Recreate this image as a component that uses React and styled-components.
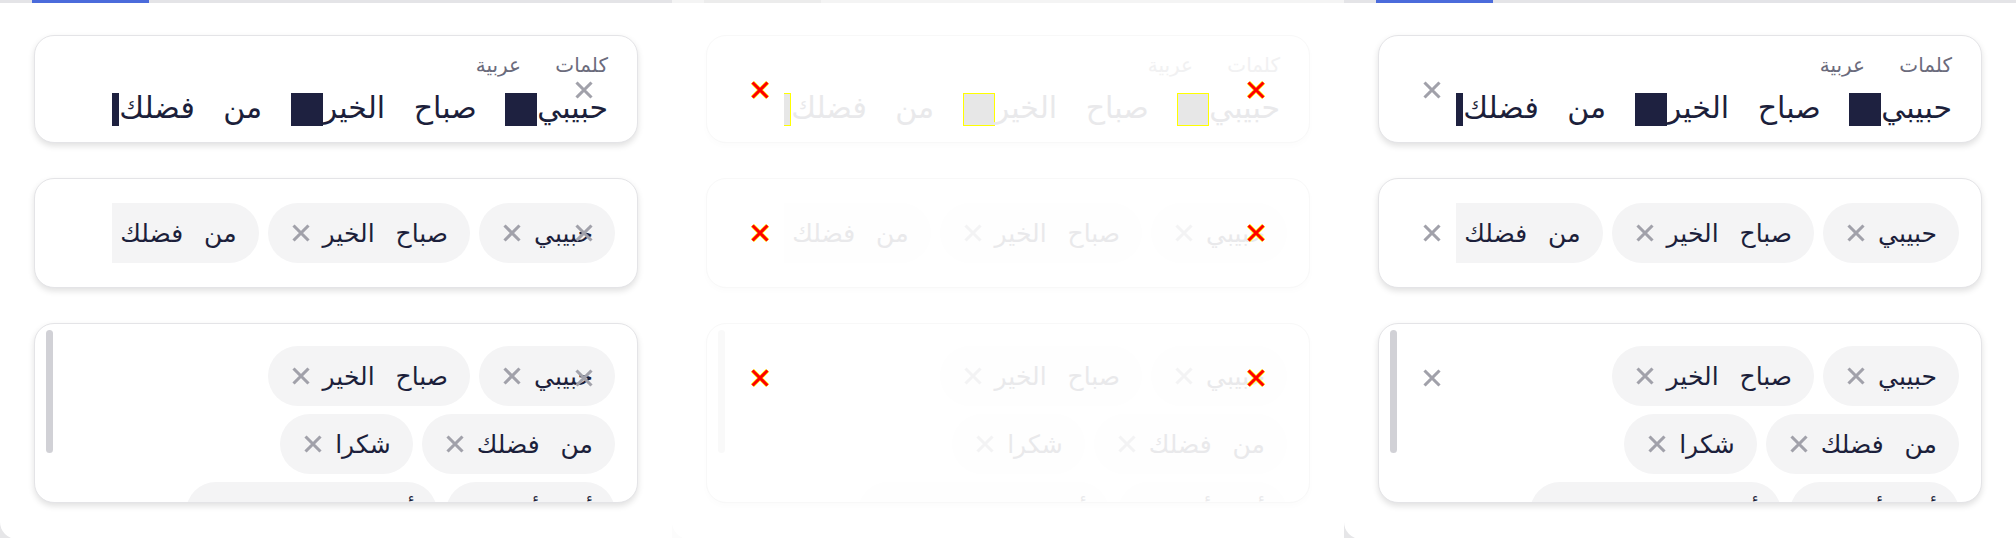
import React from 'react';
import styled, { createGlobalStyle, ThemeProvider } from 'styled-components';

const GlobalStyle = createGlobalStyle`
  html, body {
    margin: 0;
    padding: 0;
    background: #ffffff;
  }
  body {
    font-family: "DejaVu Sans", "Noto Sans", sans-serif;
  }
`;

const solid = {
  page: '#e6e6e8',
  rule: '#e4e4e7',
  tab: '#4b6bdb',
  border: '#e4e4e7',
  shadow: '0 3px 6px rgba(0, 0, 0, 0.12)',
  label: '#6b6b7c',
  text: '#1c1f3b',
  sep: '#1e2140',
  sepRing: 'transparent',
  chipBg: '#f4f4f5',
  chipIcon: '#a1a1aa',
  thumb: '#d1d1d6',
  clearColor: '#a1a1aa',
  clearHalo: null,
};

const themes = {
  actual: { ...solid, clearSides: ['right'] },
  expected: { ...solid, clearSides: ['left'] },
  diff: {
    page: '#fcfcfc',
    rule: '#f4f4f4',
    tab: '#ececec',
    border: '#f8f8f8',
    shadow: '0 3px 6px rgba(0, 0, 0, 0.015)',
    label: '#f1f1f2',
    text: '#e9e9eb',
    sep: '#e7e7e7',
    sepRing: '#ffff00',
    chipBg: '#fefefe',
    chipIcon: '#f3f3f4',
    thumb: '#f9f9f9',
    clearColor: '#ff0000',
    clearHalo: '#ffff00',
    clearSides: ['left', 'right'],
  },
};

const chips = ['حبيبي', 'صباح الخير', 'من فضلك', 'شكرا', 'أين أنت', 'أهلا وسهلا بكم'];

function XGlyph({ color, halo }) {
  return (
    <svg width="20" height="20" viewBox="0 0 20 20" fill="none">
      {halo && <path d="M2.5 2.5L17.5 17.5M17.5 2.5L2.5 17.5" stroke={halo} strokeWidth="4.4" />}
      <path d="M2.5 2.5L17.5 17.5M17.5 2.5L2.5 17.5" stroke={color} strokeWidth="3.1" />
    </svg>
  );
}

function ClearButtons({ theme }) {
  return theme.clearSides.map((side) => (
    <Clear key={side} $side={side}>
      <XGlyph color={theme.clearColor} halo={theme.clearHalo} />
    </Clear>
  ));
}

function ChipList({ items, theme }) {
  return items.map((label) => (
    <Chip key={label}>
      <span>{label}</span>
      <XGlyph color={theme.chipIcon} />
    </Chip>
  ));
}

function TagsPanel({ variant }) {
  const theme = themes[variant];
  return (
    <ThemeProvider theme={theme}>
      <Panel>
        <Surface>
          <TabRule>
            <ActiveTab />
          </TabRule>
          <Stack>
            <FieldCard>
              <Label>كلمات عربية</Label>
              <InputLine>
                حبيبي<Sep /> صباح الخير<Sep /> من فضلك<Sep /> شكرا
              </InputLine>
              <ClearButtons theme={theme} />
            </FieldCard>

            <ChipCard>
              <ChipRow>
                <ChipList items={chips} theme={theme} />
              </ChipRow>
              <ClearButtons theme={theme} />
            </ChipCard>

            <ScrollCard>
              <ChipWrap>
                <ChipList items={chips} theme={theme} />
              </ChipWrap>
              <ScrollThumb />
              <ClearButtons theme={theme} />
            </ScrollCard>
          </Stack>
        </Surface>
      </Panel>
    </ThemeProvider>
  );
}

export default function App() {
  return (
    <>
      <GlobalStyle />
      <Page>
        <TagsPanel variant="actual" />
        <TagsPanel variant="diff" />
        <TagsPanel variant="expected" />
      </Page>
    </>
  );
}

const Page = styled.div`
  display: flex;
  width: 2016px;
  height: 538px;
  overflow: hidden;
`;

const Panel = styled.div`
  flex: none;
  width: 672px;
  height: 538px;
  overflow: hidden;
  background: ${(p) => p.theme.page};
`;

const Surface = styled.div`
  display: flex;
  flex-direction: column;
  height: 539px;
  background: #ffffff;
  border-bottom-left-radius: 17px;
`;

const TabRule = styled.div`
  flex: none;
  height: 3px;
  padding-left: 32px;
  background: ${(p) => p.theme.rule};
`;

const ActiveTab = styled.div`
  width: 117px;
  height: 100%;
  background: ${(p) => p.theme.tab};
`;

const Stack = styled.div`
  display: flex;
  flex-direction: column;
  gap: 35px;
  padding: 32px 34px 0;
`;

const Card = styled.div`
  position: relative;
  box-sizing: border-box;
  direction: rtl;
  background: #ffffff;
  border: 1px solid ${(p) => p.theme.border};
  border-radius: 20px;
  box-shadow: ${(p) => p.theme.shadow};
`;

const FieldCard = styled(Card)`
  display: flex;
  flex-direction: column;
  height: 108px;
  padding: 17px 29px 0 77px;
`;

const Label = styled.div`
  font-size: 20px;
  line-height: 24px;
  word-spacing: 28px;
  color: ${(p) => p.theme.label};
  margin-bottom: 7px;
`;

const InputLine = styled.div`
  flex: none;
  height: 48px;
  font-size: 30px;
  line-height: 48px;
  white-space: nowrap;
  overflow: hidden;
  word-spacing: 19px;
  color: ${(p) => p.theme.text};
`;

const Sep = styled.span`
  display: inline-block;
  width: 32px;
  height: 33px;
  vertical-align: -8px;
  background: ${(p) => p.theme.sep};
  box-shadow: inset 0 0 0 1px ${(p) => p.theme.sepRing};
`;

const ChipCard = styled(Card)`
  display: flex;
  align-items: center;
  height: 110px;
  padding: 0 22px 0 77px;
`;

const ChipRow = styled.div`
  display: flex;
  gap: 9px;
  width: 100%;
  overflow: hidden;
`;

const ScrollCard = styled(Card)`
  height: 180px;
  overflow: hidden;
  padding: 22px 22px 0 77px;
`;

const ScrollThumb = styled.div`
  position: absolute;
  top: 6px;
  left: 11px;
  width: 7px;
  height: 123px;
  border-radius: 4px;
  background: ${(p) => p.theme.thumb};
`;

const ChipWrap = styled.div`
  display: flex;
  flex-wrap: wrap;
  gap: 8px 9px;
`;

const Chip = styled.span`
  flex: none;
  display: inline-flex;
  align-items: center;
  gap: 12px;
  height: 60px;
  padding: 0 22px 0 23px;
  border-radius: 30px;
  background: ${(p) => p.theme.chipBg};
  font-size: 25px;
  word-spacing: 13px;
  white-space: nowrap;
  color: ${(p) => p.theme.text};

  svg {
    flex: none;
  }
`;

const Clear = styled.span`
  position: absolute;
  top: 44px;
  ${(p) => p.$side}: 43px;
  z-index: 2;
  display: flex;
  width: 20px;
  height: 20px;
`;
